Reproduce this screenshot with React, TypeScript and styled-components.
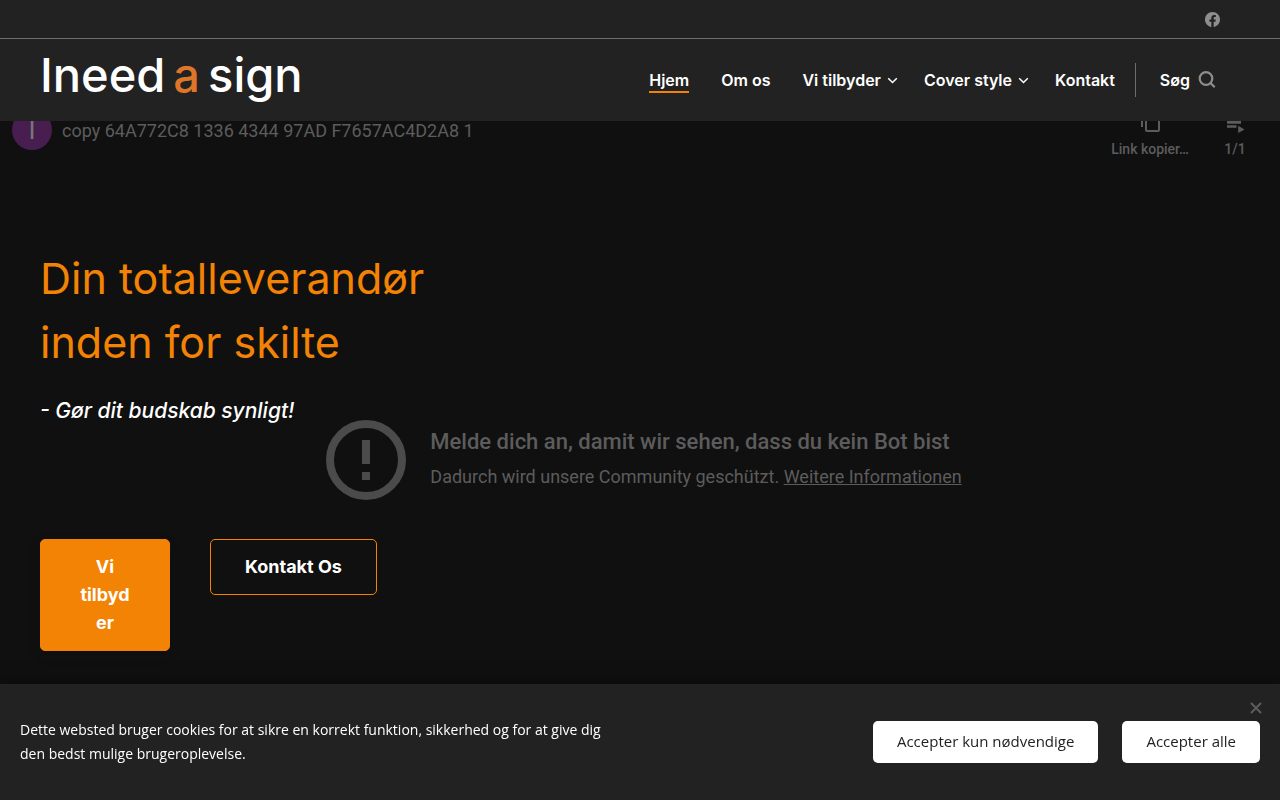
import React from "react";
import styled, { createGlobalStyle, css } from "styled-components";

const accent = "#f28305";
const panel = "#222222";
const dim = "#5c5c5c";

const GlobalStyle = createGlobalStyle`
  *, *::before, *::after { box-sizing: border-box; }
  body { margin: 0; background: #101010; color: #fff; font-family: Inter, sans-serif; }
  h1, p { margin: 0; }
  a { color: inherit; text-decoration: none; }
  button { font: inherit; border: 0; cursor: pointer; }
  svg { display: block; flex: none; }
`;

const Page = styled.div`
  min-height: 100vh;
  max-height: 100vh;
  overflow: hidden;
  background: #101010;
`;

const Header = styled.header`
  position: relative;
  z-index: 2;
  background: ${panel};
`;

const TopBar = styled.div`
  display: flex;
  justify-content: flex-end;
  align-items: center;
  height: 39px;
  padding: 0 60px;
  border-bottom: 1px solid #6e6e6e;
  color: #8e8e8e;
`;

const MainBar = styled.div`
  display: flex;
  align-items: center;
  justify-content: space-between;
  height: 82px;
  padding: 0 64px 0 40px;
`;

const Logo = styled.a`
  display: flex;
  gap: 8px;
  padding-bottom: 10px;
  font-size: 47px;
  font-weight: 500;
  line-height: 60px;
`;

const LogoAccent = styled.span`
  color: #df7529;
`;

const Nav = styled.nav`
  display: flex;
  align-items: center;
  font-size: 16px;
  font-weight: 600;
  line-height: 22px;
`;

const NavList = styled.ul`
  display: flex;
  gap: 32px;
  margin: 0;
  padding: 0 20px 0 0;
  list-style: none;
`;

const NavLink = styled.a<{ $active?: boolean }>`
  display: flex;
  align-items: center;
  gap: 6px;
  padding-top: 2px;
  border-bottom: 2px solid ${(p) => (p.$active ? accent : "transparent")};
`;

const NavItem = styled.li<{ $menu?: boolean }>`
  ${(p) => p.$menu && css`margin-right: -6px;`}
`;

const SearchButton = styled.button`
  display: flex;
  align-items: center;
  gap: 8px;
  height: 34px;
  padding: 0 0 0 24px;
  border-left: 1px solid #6e6e6e;
  background: none;
  color: #fff;
`;

const Hero = styled.main`
  position: relative;
  margin-top: -22px;
  min-height: calc(100vh - 78px);
`;

const Player = styled.div`
  position: absolute;
  inset: 0;
  font-family: Roboto, sans-serif;
  font-size: 18px;
  line-height: 24px;
  color: ${dim};
`;

const PlayerBar = styled.div`
  display: flex;
  align-items: flex-start;
  padding: 11px 33px 0 12px;
`;

const Avatar = styled.span`
  width: 40px;
  height: 40px;
  margin-right: 10px;
  border-radius: 50%;
  background: #481d50;
  color: #777;
  font-size: 26px;
  line-height: 40px;
  text-align: center;
`;

const VideoTitle = styled.span`
  flex: 1;
  line-height: 42px;
`;

const PlayerAction = styled.div`
  display: flex;
  flex-direction: column;
  align-items: center;
  margin-left: 34px;
  font-size: 14px;
  font-weight: 500;
  line-height: 24px;
  gap: 3px;
`;

const Notice = styled.div`
  position: absolute;
  inset: 0;
  display: flex;
  align-items: center;
  justify-content: center;
  gap: 24px;
  padding-left: 8px;
`;

const NoticeText = styled.div`
  padding-bottom: 3px;
`;

const NoticeTitle = styled.p`
  margin-bottom: 9px;
  font-size: 22px;
  font-weight: 500;
  line-height: 28px;
`;

const NoticeLink = styled.a`
  text-decoration: underline;
`;

const HeroContent = styled.div`
  position: relative;
  width: 480px;
  padding: 147px 0 0 40px;
`;

const Title = styled.h1`
  color: ${accent};
  font-size: 43px;
  font-weight: 400;
  line-height: 64px;
`;

const Subtitle = styled.p`
  margin: 21px 0 112px;
  font-size: 21px;
  font-style: italic;
  font-weight: 500;
  line-height: 32px;
`;

const Actions = styled.div`
  display: flex;
  align-items: flex-start;
  gap: 40px;
`;

const Action = styled.a<{ $filled?: boolean }>`
  padding: 13px 34px;
  border: 1px solid ${accent};
  border-radius: 5px;
  font-size: 18px;
  font-weight: 700;
  line-height: 28px;
  text-align: center;
  ${(p) =>
    p.$filled &&
    css`
      width: 130px;
      padding: 13px 36px;
      background: ${accent};
      overflow-wrap: anywhere;
      box-shadow: 0 4px 12px rgba(0, 0, 0, 0.15);
    `}
`;

const CookieBar = styled.aside`
  position: fixed;
  inset: auto 0 0;
  z-index: 3;
  display: flex;
  align-items: center;
  justify-content: space-between;
  min-height: 116px;
  padding: 20px;
  background: ${panel};
  box-shadow: 0 0 16px rgba(0, 0, 0, 0.6);
  font-family: "Open Sans", sans-serif;
`;

const CookieText = styled.p`
  max-width: 600px;
  font-size: 14px;
  line-height: 24px;
`;

const CookieActions = styled.div`
  display: flex;
  gap: 24px;
`;

const CookieButton = styled.button`
  height: 42px;
  padding: 0 24px 2px;
  border-radius: 5px;
  background: #fff;
  color: ${panel};
  font-size: 15px;
`;

const CloseButton = styled.button`
  position: absolute;
  top: 18px;
  right: 18px;
  padding: 0;
  background: none;
  color: #5c5c5c;
`;

const Chevron = () => (
  <svg width="11" height="8" viewBox="0 0 11 8" fill="none" stroke="currentColor" strokeWidth="1.5">
    <path d="M1.2 2.2 5.5 6.5 9.8 2.2" />
  </svg>
);

export default function App() {
  return (
    <Page>
      <GlobalStyle />
      <Header>
        <TopBar>
          <a href="#facebook" aria-label="Facebook">
            <svg width="15" height="15" viewBox="0 0 24 24" fill="currentColor">
              <path d="M24 12.07C24 5.4 18.63 0 12 0S0 5.4 0 12.07C0 18.1 4.39 23.1 10.13 24v-8.44H7.08v-3.49h3.05V9.41c0-3.02 1.79-4.69 4.53-4.69 1.31 0 2.68.24 2.68.24v2.97h-1.51c-1.49 0-1.96.93-1.96 1.89v2.25h3.33l-.53 3.49h-2.8V24C19.61 23.1 24 18.1 24 12.07" />
            </svg>
          </a>
        </TopBar>
        <MainBar>
          <Logo href="#hjem">
            <span>Ineed</span>
            <LogoAccent>a</LogoAccent>
            <span>sign</span>
          </Logo>
          <Nav>
            <NavList>
              <NavItem><NavLink href="#hjem" $active>Hjem</NavLink></NavItem>
              <NavItem><NavLink href="#om-os">Om os</NavLink></NavItem>
              <NavItem $menu><NavLink href="#vi-tilbyder">Vi tilbyder <Chevron /></NavLink></NavItem>
              <NavItem $menu><NavLink href="#cover-style">Cover style <Chevron /></NavLink></NavItem>
              <NavItem><NavLink href="#kontakt">Kontakt</NavLink></NavItem>
            </NavList>
            <SearchButton type="button">
              Søg
              <svg width="18" height="18" viewBox="0 0 18 18" fill="none" stroke="#8e8e8e" strokeWidth="2.2">
                <circle cx="8" cy="7.500" r="6.300" />
                <path d="m12.500 12 4.200 4.200" />
              </svg>
            </SearchButton>
          </Nav>
        </MainBar>
      </Header>

      <Hero>
        <Player>
          <PlayerBar>
            <Avatar>I</Avatar>
            <VideoTitle>copy 64A772C8 1336 4344 97AD F7657AC4D2A8 1</VideoTitle>
            <PlayerAction>
              <svg width="24" height="24" viewBox="0 0 24 24" fill="currentColor">
                <path d="M17 0H5a2 2 0 0 0-2 2v15h2V2h12V0Zm3 4H9a2 2 0 0 0-2 2v14c0 1.100.9 2 2 2h11a2 2 0 0 0 2-2V6a2 2 0 0 0-2-2Zm0 16H9V6h11v14Z" />
              </svg>
              Link kopier…
            </PlayerAction>
            <PlayerAction>
              <svg width="24" height="24" viewBox="0 0 24 24" fill="currentColor">
                <path d="M4 6h14v2H4zM4 11h14v2.800H4zM4 15.200h9.500v2.600H4zM15.200 15.800v7.200l6.300-3.600z" />
              </svg>
              1/1
            </PlayerAction>
          </PlayerBar>
          <Notice>
            <svg width="80" height="80" viewBox="0 0 80 80" fill="none" stroke="#4b4b4b" strokeWidth="8">
              <circle cx="40" cy="40" r="36" />
              <path d="M40 20v24M40 52v8" />
            </svg>
            <NoticeText>
              <NoticeTitle>Melde dich an, damit wir sehen, dass du kein Bot bist</NoticeTitle>
              <p>
                Dadurch wird unsere Community geschützt.{" "}
                <NoticeLink href="#informationen">Weitere Informationen</NoticeLink>
              </p>
            </NoticeText>
          </Notice>
        </Player>
        <HeroContent>
          <Title>Din totalleverandør<br />inden for skilte</Title>
          <Subtitle>- Gør dit budskab synligt!</Subtitle>
          <Actions>
            <Action href="#vi-tilbyder" $filled>Vi tilbyder</Action>
            <Action href="#kontakt">Kontakt Os</Action>
          </Actions>
        </HeroContent>
      </Hero>

      <CookieBar aria-label="Cookies">
        <CookieText>
          Dette websted bruger cookies for at sikre en korrekt funktion, sikkerhed og for at give dig den bedst mulige
          brugeroplevelse.
        </CookieText>
        <CookieActions>
          <CookieButton type="button">Accepter kun nødvendige</CookieButton>
          <CookieButton type="button">Accepter alle</CookieButton>
        </CookieActions>
        <CloseButton type="button" aria-label="Luk">
          <svg width="12" height="12" viewBox="0 0 12 12" fill="none" stroke="currentColor" strokeWidth="2">
            <path d="m1 1 10 10M11 1 1 11" />
          </svg>
        </CloseButton>
      </CookieBar>
    </Page>
  );
}
